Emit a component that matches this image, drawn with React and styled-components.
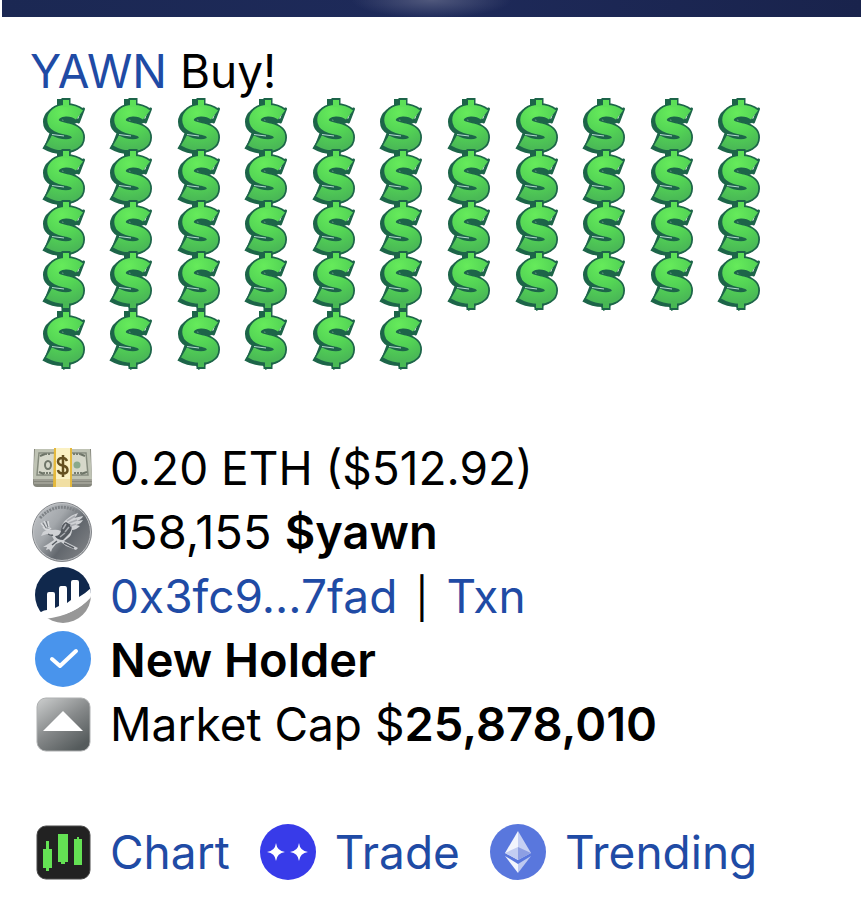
import React from 'react'
import styled, { createGlobalStyle } from 'styled-components'

const GlobalStyle = createGlobalStyle`
  * {
    box-sizing: border-box;
  }
  body {
    margin: 0;
    background: #fff;
    color: #000;
    font-family: Inter, "Liberation Sans", sans-serif;
    font-size: 46px;
  }
`

const Banner = styled.div`
  height: 17px;
  margin-left: 2px;
  background:
    radial-gradient(ellipse 80px 18px at 50% 0, #50587c, transparent),
    linear-gradient(90deg, #1b2853, #1e2a5a 50%, #19234c);
`

const Message = styled.main`
  padding: 28px 30px 20px;
`

const Title = styled.h1`
  margin: 0;
  font-size: 46px;
  font-weight: 400;
  line-height: 52px;
`

const Link = styled.a`
  color: #1f4ba5;
  text-decoration: none;
`

const Dollars = styled.div`
  display: grid;
  grid-template-columns: repeat(11, 1fr);
  grid-auto-rows: 51px;
  justify-items: center;
  max-width: 743px;
  margin-top: 1px;
  padding-bottom: ${({ $last }) => ($last ? '0' : '7px')};
  svg {
    display: block;
    width: 44px;
    height: 60px;
  }
`

const Details = styled.ul`
  list-style: none;
  margin: 75px 0 0;
  padding: 0;
`

const Row = styled.li`
  display: flex;
  align-items: center;
  gap: 14px;
  min-height: 64px;
  line-height: 64px;
`

const Icon = styled.svg`
  flex: none;
  width: 66px;
  height: 64px;
`

const Text = styled.span`
  white-space: pre;
  font-size: ${({ $large }) => ($large ? '47px' : '46px')};
  b {
    font-size: 47px;
    font-weight: 600;
    line-height: 1;
  }
`

const Separator = styled.span`
  padding: 0 5px;
  font-size: 40px;
  line-height: 1;
`

const Actions = styled.nav`
  display: flex;
  flex-wrap: wrap;
  gap: 0 25px;
  margin-top: 64px;
`

const Action = styled(Link)`
  display: flex;
  align-items: center;
  gap: 14px;
  line-height: 64px;
`

const sCurve =
  'M37.5 17C33 13.5 28 12.6 23.5 12.8C16 13 11 17 11 22C11 28.5 19 29.7 25.5 31.2C31.5 32.6 35.5 35 35.5 39.5C35.5 44.8 30 47 24 47C18 47 12 45.5 7 42.5'

function Dollar() {
  return (
    <svg viewBox="0 0 44 60" fill="none" aria-hidden="true">
      <g stroke="#1d6549">
        <path d={sCurve} strokeWidth="14" transform="translate(-3 2)" />
        <path d="M19 1V12M20 49L25 58" strokeWidth="8" />
        <path d={sCurve} strokeWidth="15" />
        <path d="M41.5 11L36.5 24M9 35.5L4 48.5" strokeWidth="3" strokeLinecap="round" />
        <path d="M24 0V10M24 50V59" strokeWidth="9" />
      </g>
      <path d="M20 22Q27 16 37 21L37 24L30 27Z" fill="#1d6549" />
      <path d="M8 35L28 37V41L8 38Z" fill="#1d6549" />
      <path d="M10 36.5L22 38" stroke="#b5d8d0" />
      <path d={sCurve} stroke="url(#dollarFace)" strokeWidth="11.5" />
      <path d="M24 2V9" stroke="#5cdf57" strokeWidth="6" />
      <path d="M24 50V57" stroke="#49b954" strokeWidth="6" />
    </svg>
  )
}

function Defs() {
  return (
    <svg width="0" height="0" style={{ position: 'absolute' }} aria-hidden="true">
      <defs>
        <radialGradient id="dollarFace" gradientUnits="userSpaceOnUse" cx="20" cy="15" r="36">
          <stop offset="0" stopColor="#66eb5b" />
          <stop offset="0.55" stopColor="#53d455" />
          <stop offset="1" stopColor="#4ab956" />
        </radialGradient>
        <linearGradient id="coin" x1="0" y1="0.1" x2="0.9" y2="0.8">
          <stop offset="0" stopColor="#c3c6ca" />
          <stop offset="0.4" stopColor="#a3a7ab" />
          <stop offset="0.7" stopColor="#62676d" />
          <stop offset="1" stopColor="#7a7d81" />
        </linearGradient>
        <linearGradient id="cap" x1="0" y1="0" x2="0.7" y2="1">
          <stop offset="0" stopColor="#cdcfcf" />
          <stop offset="0.55" stopColor="#858889" />
          <stop offset="1" stopColor="#555b5c" />
        </linearGradient>
        <clipPath id="round">
          <circle cx="33" cy="31" r="28" />
        </clipPath>
      </defs>
    </svg>
  )
}

function CashIcon() {
  return (
    <Icon viewBox="0 -1 66 64" aria-hidden="true">
      <path d="M4 12H61L62 47Q62 50 58 50H7Q3 50 3 46Z" fill="#85867c" />
      <path d="M4 43H62M4 46H62" stroke="#b8b8ad" />
      <path d="M5 12H60L62 42H3Z" fill="#bfc3b4" />
      <path d="M9 16H56L58 38H7Z" fill="#d6d8ca" stroke="#858b7d" strokeWidth="1.5" />
      <path d="M10 19l5-2M9 35l5 2M55 19l-5-2M57 35l-6 2" stroke="#6d7467" strokeWidth="2" />
      <ellipse cx="18" cy="28" rx="3" ry="4" fill="none" stroke="#6f7669" strokeWidth="2" />
      <circle cx="47" cy="28" r="3.5" fill="#8aa98c" />
      <path d="M15 17h6M43 17h8M13 36h8M44 36h8" stroke="#777d70" strokeWidth="2" strokeDasharray="2 1" />
      <path d="M24 11H42V50H23Z" fill="#e5b93c" />
      <path d="M26 11H40V50H26Z" fill="#fbf1c3" />
      <path d="M26 42H40V50H26Z" fill="#f1dfa3" />
      <path
        d="M37 24Q36 21 32.5 21Q28 21 28 24.5Q28 27.5 32.5 28.5Q37.5 29.5 37.5 33Q37.5 36.5 33 36.5Q28.5 36.5 28 33M33 18V40"
        fill="none"
        stroke="#65501f"
        strokeWidth="2.5"
      />
    </Icon>
  )
}

function CoinIcon() {
  return (
    <Icon viewBox="0 -1 66 64" aria-hidden="true">
      <circle cx="32" cy="31" r="29.5" fill="url(#coin)" stroke="#85888c" />
      <circle cx="32" cy="31" r="28.5" fill="none" stroke="#bfc1c4" />
      <path d="M10 17Q27 -1 48 11" fill="none" stroke="#7e8286" strokeWidth="3" strokeDasharray="2 1" />
      <path
        d="M31 30Q31 22 37 18Q41 14 48 12Q47 15 44 17L53 15Q52 18 47 20L53 19Q51 23 46 24L50 25Q46 29 42 29Q42 34 38 37L34 40L40 43L48 47L46 49L36 45L31 41L26 43L22 48L21 51L19 48L16 49L17 46L13 46L18 43L24 39L22 35L17 33L11 35L13 31Q17 28 22 29Q27 28 31 30Z"
        fill="#d0d2d5"
      />
      <path d="M31 30Q31 23 36 21L41 24Q43 29 38 34L33 39Q27 39 25 35Q30 35 31 30Z" fill="#555a60" />
      <path d="M33 28l3-5M35 31l4-5M30 36l5-4M37 20l8-5M39 22l8-3M40 25l6-2" stroke="#a9acb1" strokeWidth="1.5" />
      <path d="M18 33Q21 35 23 34M22 44l5-4M34 42l10 5" fill="none" stroke="#5a5f65" strokeWidth="1.5" />
      <path d="M11 22L15 27M14 20L17 26M18 20L19 27M13 26Q17 31 21 27" fill="none" stroke="#d7d9dc" strokeWidth="1.5" />
      <path d="M13 22L16 27M16 20L18 26" stroke="#767a7f" />
    </Icon>
  )
}

function ExplorerIcon() {
  return (
    <Icon viewBox="0 0 66 64" aria-hidden="true">
      <g clipPath="url(#round)">
        <rect width="66" height="64" fill="#fff" />
        <path d="M0 0H66V24Q53 40 12 48H0Z" fill="#10284c" />
        <path d="M15 55Q48 51 62 30V64H15Z" fill="#979797" />
        <path
          d="M11 48Q14 46 17 46V30Q17 28 19 28H23Q25 28 25 30V44L29 42V25Q29 22 31 22H35Q37 22 37 25V39L41 36V18Q41 16 43 16H47Q49 16 49 18V33Q56 29 62 23V32Q44 53 14 53Z"
          fill="#fff"
        />
      </g>
    </Icon>
  )
}

function VerifiedIcon() {
  return (
    <Icon viewBox="0 0 66 64" aria-hidden="true">
      <circle cx="33" cy="31" r="28" fill="#4994ec" />
      <path
        d="M22 31L30 38L46 23"
        fill="none"
        stroke="#fff"
        strokeWidth="4"
        strokeLinecap="round"
        strokeLinejoin="round"
      />
    </Icon>
  )
}

function UpIcon() {
  return (
    <Icon viewBox="0 0 66 64" aria-hidden="true">
      <rect x="7" y="6" width="53" height="53" rx="9" fill="url(#cap)" stroke="#aeb0b1" />
      <path d="M33 19L53 39H13Z" fill="#fff" />
    </Icon>
  )
}

function ChartIcon() {
  return (
    <Icon viewBox="0 -1 66 64" aria-hidden="true">
      <rect x="7" y="5" width="53" height="53" rx="9" fill="#222" stroke="#4a4a4a" />
      <path
        d="M13 28H16V20H19V28H22V47H19V50H16V47H13ZM28 13H38V41H35V43H31V41H28ZM44 18H47V16H49V18H52V44H44Z"
        fill="#64e254"
      />
    </Icon>
  )
}

function TradeIcon() {
  return (
    <Icon viewBox="0 -1 66 64" aria-hidden="true">
      <circle cx="33" cy="31" r="28" fill="#383be9" />
      <path
        d="M21 22Q22 30 30 31Q22 32 21 40Q20 32 12 31Q20 30 21 22ZM44 22Q45 30 53 31Q45 32 44 40Q43 32 35 31Q43 30 44 22Z"
        fill="#fff"
      />
    </Icon>
  )
}

function EthIcon() {
  return (
    <Icon viewBox="0 -1 66 64" aria-hidden="true">
      <circle cx="33" cy="31" r="28" fill="#5977dd" />
      <path d="M33 10L20 32L33 39Z" fill="#f2f5fd" />
      <path d="M33 10L46 32L33 39Z" fill="#c6d0f3" />
      <path d="M20 32L33 26V39Z" fill="#c2cdf2" />
      <path d="M33 26L46 32L33 39Z" fill="#8d9fe3" />
      <path d="M20 35L33 43V52Z" fill="#f2f5fd" />
      <path d="M46 35L33 43V52Z" fill="#bdc9f1" />
    </Icon>
  )
}

const actions = [
  { label: 'Chart', icon: <ChartIcon /> },
  { label: 'Trade', icon: <TradeIcon /> },
  { label: 'Trending', icon: <EthIcon /> },
]

const dollars = (count) => Array.from({ length: count }, (_, i) => <Dollar key={i} />)

export default function App() {
  return (
    <>
      <GlobalStyle />
      <Defs />
      <Banner />
      <Message>
        <Title>
          <Link href="#yawn">YAWN</Link> Buy!
        </Title>
        <Dollars>{dollars(44)}</Dollars>
        <Dollars $last>{dollars(6)}</Dollars>
        <Details>
          <Row>
            <CashIcon />
            <Text>0.20 ETH ($512.92)</Text>
          </Row>
          <Row>
            <CoinIcon />
            <Text $large>158,155 <b>$yawn</b></Text>
          </Row>
          <Row>
            <ExplorerIcon />
            <Text>
              <Link href="#wallet">0x3fc9...7fad</Link> <Separator>|</Separator> <Link href="#txn">Txn</Link>
            </Text>
          </Row>
          <Row>
            <VerifiedIcon />
            <Text><b>New Holder</b></Text>
          </Row>
          <Row>
            <UpIcon />
            <Text>Market Cap $<b>25,878,010</b></Text>
          </Row>
        </Details>
        <Actions>
          {actions.map(({ label, icon }) => (
            <Action key={label} href={`#${label.toLowerCase()}`}>
              {icon}
              {label}
            </Action>
          ))}
        </Actions>
      </Message>
    </>
  )
}
